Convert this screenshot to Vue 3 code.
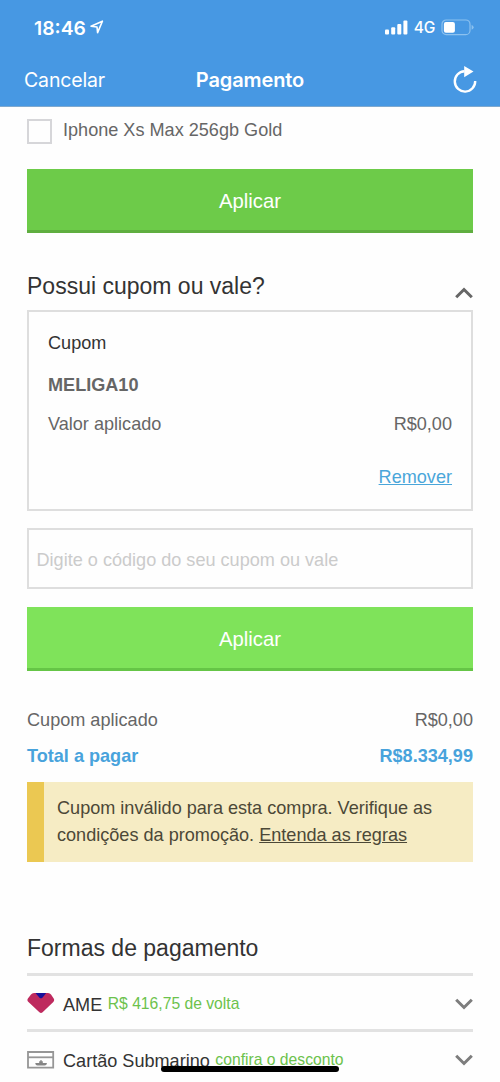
<script setup>
import { ref } from 'vue'

const code = ref('')
const methods = [
  { id: 'ame', name: 'AME', note: 'R$ 416,75 de volta' },
  { id: 'card', name: 'Cartão Submarino', note: 'confira o desconto' },
]
</script>

<template>
  <div class="screen">
    <header class="top">
      <div class="status">
        <span class="clock">18:46</span>
        <svg class="locate" width="14" height="14" viewBox="0 0 14 14">
          <path d="M1 6.2 12.4 1.2 7.6 12.6 7 7z" />
        </svg>
        <span class="grow"></span>
        <svg class="signal" width="23" height="15" viewBox="0 0 23 15">
          <rect x="0" y="9.4" width="4" height="5.1" rx="1" />
          <rect x="6.2" y="7.2" width="4" height="7.3" rx="1" />
          <rect x="12.3" y="4" width="4" height="10.5" rx="1" />
          <rect x="18.4" y="0.6" width="4" height="13.9" rx="1" />
        </svg>
        <span class="network">4G</span>
        <svg class="battery" width="33" height="17" viewBox="0 0 33 17">
          <rect x="1" y="1" width="28" height="14.6" rx="4.2" class="shell" />
          <path d="M30.6 5.8q2 1 2 2.5t-2 2.5z" class="cap" />
          <rect x="2.9" y="2.9" width="11" height="10.8" rx="2" class="charge" />
        </svg>
      </div>
      <nav class="nav">
        <span class="cancel">Cancelar</span>
        <span class="heading">Pagamento</span>
        <svg class="reload" width="26" height="30" viewBox="0 0 26 30">
          <path d="M12.5 6.2A10.2 10.2 0 1 0 23.2 16" class="arc" />
          <path d="M12.2 1 21.5 6.6 12.2 12.2z" class="tip" />
        </svg>
      </nav>
    </header>

    <main class="content">
      <label class="product"><i class="check"></i><span>Iphone Xs Max 256gb Gold</span></label>
      <button class="apply">Aplicar</button>

      <div class="section-head">
        <h2>Possui cupom ou vale?</h2>
        <svg class="chev up" width="18" height="12" viewBox="0 0 18 12"><path d="M1.2 10.3 9 2.5l7.8 7.8" /></svg>
      </div>

      <section class="coupon">
        <div class="coupon-title">Cupom</div>
        <div class="coupon-code">MELIGA10</div>
        <div class="line"><span>Valor aplicado</span><span>R$0,00</span></div>
        <a class="remove">Remover</a>
      </section>

      <input v-model="code" class="field" placeholder="Digite o código do seu cupom ou vale" />
      <button class="apply light">Aplicar</button>

      <div class="line sum"><span>Cupom aplicado</span><span>R$0,00</span></div>
      <div class="line total"><span>Total a pagar</span><span>R$8.334,99</span></div>

      <div class="alert">
        Cupom inválido para esta compra. Verifique as<br />condições da promoção. <a>Entenda as regras</a>
      </div>

      <h2 class="pay-title">Formas de pagamento</h2>
      <div v-for="m in methods" :key="m.id" class="method">
        <svg v-if="m.id === 'ame'" class="icon" width="28" height="24" viewBox="0 0 28 24">
          <path d="M7 1H21Q23 1 24 2.5L26.7 6.5Q27.8 8.3 26.3 9.9L15.6 20.2Q14 21.7 12.4 20.2L1.2 9.8Q-.2 8.3.9 6.5L4 2.5Q5 1 7 1z" fill="#be2a5e" />
          <path d="M8.5 1H19.2L15.4 5.7Q14 6.9 12.5 5.7z" fill="#17109a" />
        </svg>
        <svg v-else class="icon" width="28" height="24" viewBox="0 0 28 24">
          <path d="M1 4H26.2V19.7H1z" fill="none" stroke="#969696" stroke-width="1.8" />
          <path d="M1 9.3H26.2" stroke="#969696" stroke-width="1.8" />
          <path d="M8.2 14.9H12.2V13.3H13.4V11.9H14.6V13.3H15.8V14.9H20Q19.7 17.5 17.5 17.5H10.5Q8.5 17.5 8.2 14.9z" fill="#858585" />
        </svg>
        <span class="name">{{ m.name }}</span>
        <span class="note">{{ m.note }}</span>
        <span class="grow"></span>
        <svg class="chev" width="18" height="12" viewBox="0 0 18 12"><path d="M1.2 1.7 9 9.5l7.8-7.8" /></svg>
      </div>
    </main>
    <div class="home-bar"></div>
  </div>
</template>

<style>
body {
  margin: 0;
  background: #fefefe;
}
</style>

<style scoped>
* {
  box-sizing: border-box;
}
.screen {
  position: relative;
  width: 500px;
  height: 1082px;
  overflow: hidden;
  background: #fefefe;
  font-family: "Liberation Sans", Arial, sans-serif;
  font-size: 18.1px;
  line-height: 22px;
  color: #666;
}
.grow {
  flex: 1;
}
.top {
  height: 107px;
  background: #4798e3;
  border-bottom: 1px solid #7fa9cf;
  color: #fff;
  font-family: Inter, sans-serif;
}
.status {
  display: flex;
  align-items: center;
  height: 54px;
  padding: 0 26px 0 34px;
}
.clock {
  margin-top: 2px;
  font-size: 19.3px;
  font-weight: 600;
}
.locate {
  margin-left: 4px;
  fill: none;
  stroke: #fff;
  stroke-width: 1.6;
  stroke-linejoin: round;
}
.signal {
  fill: #fff;
}
.network {
  margin: 2px 6px 0 6px;
  font-size: 15.5px;
  font-weight: 500;
  letter-spacing: -0.3px;
}
.shell {
  fill: none;
  stroke: #8cc1ef;
  stroke-width: 1.2;
}
.cap {
  fill: #8cc1ef;
}
.charge {
  fill: #fff;
}
.nav {
  display: grid;
  grid-template-columns: 1fr auto 1fr;
  align-items: center;
  height: 52px;
  padding: 0 22px 0 24px;
}
.cancel {
  font-size: 19.5px;
  letter-spacing: -0.15px;
}
.heading {
  margin-right: 2px;
  font-size: 20px;
  font-weight: 600;
  letter-spacing: -0.1px;
}
.reload {
  justify-self: end;
}
.arc {
  fill: none;
  stroke: #fff;
  stroke-width: 2.4;
}
.tip {
  fill: #fff;
}
.content {
  display: flex;
  flex-direction: column;
  padding: 12px 27px 0;
}
.product {
  display: flex;
  height: 50px;
}
.product span {
  margin-left: 11px;
}
.check {
  width: 25px;
  height: 25px;
  border: 2px solid #d6d6d9;
}
.apply {
  flex: none;
  height: 64px;
  padding: 4px 0 0;
  border: 0;
  border-bottom: 3px solid #5fae40;
  background: #6dcb49;
  color: #fff;
  font: 20.3px "Liberation Sans", Arial, sans-serif;
}
.apply.light {
  margin-top: 18px;
  padding-top: 3px;
  background: #7fe35a;
  border-bottom-color: #65c546;
}
.section-head {
  display: flex;
  justify-content: space-between;
  height: 77px;
  padding-top: 39px;
}
h2 {
  margin: 0;
  font-size: 23px;
  line-height: 28px;
  font-weight: 400;
  color: #333;
}
.chev {
  fill: none;
  stroke: #7d7d7d;
  stroke-width: 3;
}
.chev.up {
  margin-top: 15px;
  stroke: #666;
}
.coupon {
  display: flex;
  flex-direction: column;
  height: 201px;
  padding: 20px 19px 0;
  border: 2px solid #dedede;
}
.coupon-title {
  color: #333;
}
.coupon-code {
  margin: 20px 0 17px;
  font-weight: 700;
}
.line {
  display: flex;
  justify-content: space-between;
}
.remove {
  align-self: flex-end;
  margin-top: 31px;
  color: #4aa6da;
  text-decoration: underline;
}
.field {
  height: 61px;
  margin: 17px 0 0;
  padding: 3px 7.5px 0;
  border: 2px solid #dedede;
  border-radius: 0;
  background: transparent;
  font: 18.1px "Liberation Sans", Arial, sans-serif;
}
.field::placeholder {
  color: #cbcbcb;
  opacity: 1;
}
.sum {
  margin-top: 38px;
}
.total {
  margin-top: 14px;
  font-weight: 700;
  color: #48a3dc;
}
.alert {
  height: 80px;
  margin-top: 15px;
  padding: 13px 0 0 13px;
  border-left: 17px solid #ebc852;
  background: #f6ecc4;
  line-height: 27px;
  color: #4c4837;
}
.alert a {
  text-decoration: underline;
}
.pay-title {
  height: 39px;
  margin-top: 72px;
}
.method {
  display: flex;
  align-items: center;
  height: 56px;
  padding-top: 2px;
  border-top: 3px solid #e2e2e2;
}
.icon {
  margin-right: 8px;
}
.name {
  margin-top: 3px;
  color: #333;
}
.note {
  margin-left: 5.5px;
  font-size: 15.7px;
  color: #6cc24c;
}
.method .chev {
  margin-top: 1px;
}
.home-bar {
  position: absolute;
  left: 161px;
  top: 1066px;
  width: 178px;
  height: 6px;
  border-radius: 3px;
  background: #000;
}
</style>
